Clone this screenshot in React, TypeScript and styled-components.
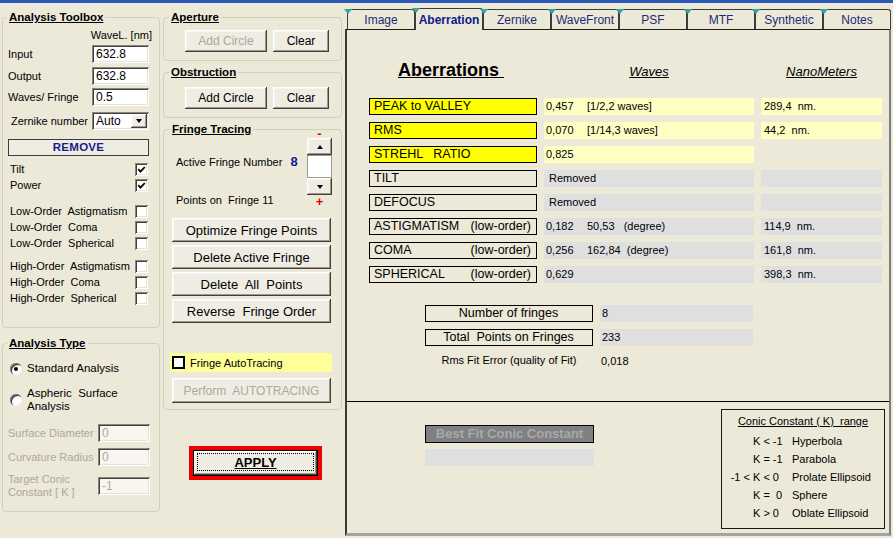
import React from "react";
import styled, { createGlobalStyle, css } from "styled-components";

const GlobalStyle = createGlobalStyle`
  html, body {
    margin: 0;
    padding: 0;
    background: #ece9d8;
  }
  body {
    font-family: "Liberation Sans", Arial, sans-serif;
    font-size: 11px;
    color: #000;
  }
  *, *::before, *::after {
    box-sizing: border-box;
  }
`;

const raised = css`
  background: #efede3;
  box-shadow: inset -1px -1px #404040, inset 1px 1px #ffffff,
    inset -2px -2px #9d9a8c, inset 2px 2px #f7f6f0;
`;

const sunken = css`
  background: #ffffff;
  box-shadow: inset 1px 1px #8a877a, inset -1px -1px #ffffff,
    inset 2px 2px #404040, inset -2px -2px #e6e3d6;
`;

const Screen = styled.div`
  width: 893px;
  height: 538px;
  overflow: hidden;
  border-top: 3px solid #2b59b8;
  display: flex;
  align-items: flex-start;
`;

const LeftCol = styled.div`
  width: 160px;
  padding-left: 2px;
  display: flex;
  flex-direction: column;
`;

const MidCol = styled.div`
  width: 179px;
  margin-left: 3px;
  display: flex;
  flex-direction: column;
`;

const RightCol = styled.div`
  width: 546px;
  margin-left: 3px;
  display: flex;
  flex-direction: column;
`;

/* ---------- group boxes ---------- */

const Group = styled.fieldset<{ $top: number; $height: number }>`
  margin: ${(p) => p.$top}px 0 0 0;
  padding: 0;
  height: ${(p) => p.$height}px;
  border: 1px solid #d0d0bf;
  border-radius: 4px;
  min-width: 0;
`;

const Legend = styled.legend<{ $offset?: number }>`
  margin-left: ${(p) => p.$offset ?? 4}px;
  padding: 0 2px;
  font-size: 11.5px;
  font-weight: bold;
  line-height: 13px;
  text-decoration: underline;
`;

/* ---------- left: toolbox ---------- */

const WaveHead = styled.div`
  margin: 4px 7px 0 0;
  height: 14px;
  line-height: 14px;
  text-align: right;
`;

const FieldRow = styled.div<{ $mt: number; $pl?: number; $pr?: number; $h?: number }>`
  display: flex;
  align-items: center;
  justify-content: space-between;
  height: ${(p) => p.$h ?? 18}px;
  margin-top: ${(p) => p.$mt}px;
  padding: 0 ${(p) => p.$pr ?? 10}px 0 ${(p) => p.$pl ?? 5}px;
`;

const FieldLabel = styled.span<{ $disabled?: boolean }>`
  line-height: 13px;
  color: ${(p) => (p.$disabled ? "#aca899" : "#000")};
`;

const TextBox = styled.div<{ $w?: number; $disabled?: boolean }>`
  ${sunken};
  width: ${(p) => p.$w ?? 57}px;
  height: 18px;
  padding: 3px 0 0 4px;
  line-height: 13px;
  font-size: 12px;
  color: ${(p) => (p.$disabled ? "#aca899" : "#000")};
  background: ${(p) => (p.$disabled ? "#f7f6f1" : "#fff")};
`;

const Select = styled.div`
  ${sunken};
  width: 57px;
  height: 18px;
  display: flex;
  align-items: center;
  padding: 2px;
  font-size: 12px;
`;

const SelectText = styled.span`
  flex: 1;
  padding-left: 2px;
`;

const DropBtn = styled.span`
  ${raised};
  width: 16px;
  height: 14px;
  display: flex;
  align-items: center;
  justify-content: center;
`;

const Arrow = styled.span<{ $up?: boolean }>`
  width: 0;
  height: 0;
  border-left: 3.5px solid transparent;
  border-right: 3.5px solid transparent;
  ${(p) =>
    p.$up ? "border-bottom: 4px solid #000;" : "border-top: 4px solid #000;"}
`;

const RemoveBtn = styled.div`
  margin: 9px 10px 0 5px;
  height: 17px;
  border: 1px solid #3c3c3c;
  background: #efede3;
  color: #1b1b8a;
  font-weight: bold;
  font-size: 11.5px;
  text-align: center;
  line-height: 15px;
  letter-spacing: 0.3px;
`;

const CheckGroup = styled.div<{ $mt: number }>`
  margin-top: ${(p) => p.$mt}px;
  display: flex;
  flex-direction: column;
`;

const CheckRow = styled.div`
  height: 16px;
  display: flex;
  align-items: center;
  justify-content: space-between;
  padding: 0 11px 0 7px;
  white-space: pre;
`;

const CheckBox = styled.span`
  ${sunken};
  width: 13px;
  height: 13px;
  display: flex;
  align-items: center;
  justify-content: center;
`;

const Tick = () => (
  <svg width="9" height="9" viewBox="0 0 9 9">
    <path d="M1.2 4.2 L3.5 6.6 L7.8 2" stroke="#000" strokeWidth="1.8" fill="none" />
  </svg>
);

/* ---------- left: analysis type ---------- */

const RadioRow = styled.div<{ $mt: number }>`
  margin-top: ${(p) => p.$mt}px;
  display: flex;
  align-items: center;
  gap: 5px;
  padding-left: 7px;
  line-height: 13px;
  font-size: 11.5px;
`;

const Radio = styled.span<{ $on?: boolean }>`
  width: 12px;
  height: 12px;
  flex: none;
  border-radius: 50%;
  background: #fff;
  box-shadow: inset 1px 1px #808080, inset 2px 2px #404040,
    inset -1px -1px #f4f3ee;
  display: flex;
  align-items: center;
  justify-content: center;

  &::after {
    content: "";
    width: 4px;
    height: 4px;
    border-radius: 50%;
    background: ${(p) => (p.$on ? "#000" : "transparent")};
  }
`;

/* ---------- middle column ---------- */

const BtnRow = styled.div<{ $mt: number }>`
  display: flex;
  gap: 6px;
  margin-top: ${(p) => p.$mt}px;
  padding-left: 21px;
`;

const Button = styled.div<{ $w: number; $h: number; $disabled?: boolean; $fs?: number }>`
  ${raised};
  width: ${(p) => p.$w}px;
  height: ${(p) => p.$h}px;
  display: flex;
  align-items: center;
  justify-content: center;
  font-size: ${(p) => p.$fs ?? 12}px;
  color: ${(p) => (p.$disabled ? "#aca899" : "#000")};
  white-space: pre;
`;

const FringeTop = styled.div`
  display: flex;
  justify-content: space-between;
  padding: 0 9px 0 12px;
`;

const FringeInfo = styled.div`
  padding-top: 19px;
  display: flex;
  flex-direction: column;
  gap: 24px;
`;

const InfoLine = styled.div`
  height: 14px;
  line-height: 14px;
  display: flex;
  white-space: pre;
`;

const ActiveNum = styled.span`
  color: #1414a0;
  font-weight: bold;
  font-size: 13px;
  margin-left: 8px;
`;

const Spinner = styled.div`
  margin-top: -7px;
  width: 25px;
  display: flex;
  flex-direction: column;
  align-items: center;
`;

const SpinSign = styled.div<{ $h: number }>`
  color: #e00000;
  font-weight: bold;
  font-size: 13px;
  height: ${(p) => p.$h}px;
  line-height: ${(p) => p.$h}px;
`;

const SpinBtn = styled.div`
  ${raised};
  width: 25px;
  height: 17px;
  display: flex;
  align-items: center;
  justify-content: center;
`;

const SpinField = styled.div`
  width: 25px;
  height: 23px;
  background: #fff;
  border: 1px solid #9d9a8c;
`;

const FringeButtons = styled.div<{ $mt: number }>`
  margin: ${(p) => p.$mt}px 0 0 8px;
  display: flex;
  flex-direction: column;
  gap: 3px;
`;

const AutoStrip = styled.div`
  margin: 30px 0 0 6px;
  width: 162px;
  height: 19px;
  background: #ffff99;
  display: flex;
  align-items: center;
  gap: 5px;
  padding-left: 2px;
`;

const BlackBox = styled.span`
  width: 13px;
  height: 13px;
  border: 2px solid #000;
  background: #fff;
`;

const ApplyFrame = styled.div`
  margin: 36px 0 0 26px;
  width: 133px;
  height: 34px;
  border: 4px solid #ee0000;
`;

const ApplyBtn = styled.div`
  ${raised};
  height: 100%;
  border: 1px solid #000;
  padding: 2px 3px 4px 3px;
`;

const FocusRing = styled.div`
  height: 100%;
  border: 1px dotted #000;
  display: flex;
  align-items: center;
  justify-content: center;
  font-weight: bold;
  font-size: 13px;
  text-decoration: underline;
`;

/* ---------- right: tabs ---------- */

const TabStrip = styled.div`
  display: flex;
  align-items: flex-end;
  margin-top: 6px;
  padding-left: 2px;
  height: 20px;
  position: relative;
  z-index: 1;
`;

const Tab = styled.div<{ $active?: boolean }>`
  position: relative;
  width: 68px;
  height: ${(p) => (p.$active ? 22 : 20)}px;
  margin-bottom: ${(p) => (p.$active ? -1 : 0)}px;
  border: 1px solid #3c3c3c;
  border-bottom: none;
  border-radius: 3px 3px 0 0;
  background: #ece9d8;
  display: flex;
  align-items: center;
  justify-content: center;
  font-size: 12px;
  font-weight: ${(p) => (p.$active ? "bold" : "normal")};
  color: ${(p) => (p.$active ? "#0b1a8c" : "#1c2a78")};

  &::before {
    content: "";
    position: absolute;
    top: -1px;
    left: -4px;
    border-left: 4px solid transparent;
    border-right: 4px solid transparent;
    border-top: 5px solid #3aa5a0;
  }
`;

const Panel = styled.div`
  height: 507px;
  border-top: 1px solid #1c1c1c;
  border-left: 2px solid #3a3a3a;
  border-right: 2px solid #7d7d7d;
  border-bottom: 3px solid #a3a3a3;
  display: flex;
  flex-direction: column;
`;

const UpperPane = styled.div`
  height: 372px;
  border-bottom: 1px solid #000;
  padding-left: 22px;
`;

const Grid = css`
  display: grid;
  grid-template-columns: 168px 210px 121px;
  column-gap: 7px;
`;

const HeadRow = styled.div`
  ${Grid};
  margin-top: 30px;
  height: 20px;
  align-items: baseline;
`;

const MainTitle = styled.span`
  padding-left: 29px;
  font-size: 18px;
  font-weight: bold;
  text-decoration: underline;
  white-space: pre;
`;

const ColTitle = styled.span`
  text-align: center;
  font-size: 13px;
  font-style: italic;
  text-decoration: underline;
`;

const Table = styled.div`
  ${Grid};
  margin-top: 18px;
  grid-auto-rows: 17px;
  row-gap: 7px;
`;

const LabelBox = styled.div<{ $yellow?: boolean; $center?: boolean }>`
  border: 1px solid #000;
  background: ${(p) => (p.$yellow ? "#ffff00" : "transparent")};
  font-size: 12.5px;
  line-height: 15px;
  padding: 0 5px 0 4px;
  display: flex;
  justify-content: ${(p) => (p.$center ? "center" : "space-between")};
  white-space: pre;
`;

const ValueBox = styled.div<{ $tone?: "yellow" | "gray" | "none"; $pl?: number }>`
  background: ${(p) =>
    p.$tone === "yellow" ? "#ffffc4" : p.$tone === "gray" ? "#dfdfdf" : "transparent"};
  line-height: 17px;
  padding-left: ${(p) => p.$pl ?? 2}px;
  display: flex;
  white-space: pre;
`;

const FirstVal = styled.span`
  width: 41px;
`;

const FitGrid = styled.div`
  margin: 22px 0 0 56px;
  display: grid;
  grid-template-columns: 168px 153px;
  column-gap: 7px;
  row-gap: 7px;
  grid-auto-rows: 17px;
`;

const RmsLabel = styled.div`
  text-align: center;
  line-height: 14px;
`;

const LowerPane = styled.div`
  flex: 1;
  display: flex;
  align-items: flex-start;
  padding: 0 4px 0 78px;
`;

const ConicFit = styled.div`
  margin-top: 23px;
  width: 169px;
  display: flex;
  flex-direction: column;
  gap: 6px;
`;

const BestFit = styled.div`
  height: 18px;
  background: #808080;
  border: 1px solid #000;
  color: #a9a9a9;
  font-weight: bold;
  font-size: 13px;
  text-align: center;
  line-height: 16px;
`;

const FitValue = styled.div`
  height: 17px;
  background: #dfdfdf;
`;

const ConicBox = styled.div`
  margin-left: auto;
  margin-top: 7px;
  width: 164px;
  height: 120px;
  border: 1px solid #1a1a1a;
  padding-top: 4px;
`;

const ConicTitle = styled.div`
  text-align: center;
  height: 14px;
  line-height: 14px;
  text-decoration: underline;
  margin-bottom: 4px;
  white-space: pre;
`;

const ConicRow = styled.div`
  display: grid;
  grid-template-columns: 31px 39px 1fr;
  height: 18px;
  align-items: center;
  white-space: pre;
`;

const ConicPre = styled.span`
  text-align: right;
`;

/* ---------- data ---------- */

const checks: string[][] = [
  ["Tilt", "Power"],
  ["Low-Order  Astigmatism", "Low-Order  Coma", "Low-Order  Spherical"],
  ["High-Order  Astigmatism", "High-Order  Coma", "High-Order  Spherical"],
];

type Row = {
  label: string;
  suffix?: string;
  yellow?: boolean;
  v1: string;
  v2?: string;
  nm?: string;
  nmBox: boolean;
  removed?: boolean;
};

const rows: Row[] = [
  { label: "PEAK to VALLEY", yellow: true, v1: "0,457", v2: "[1/2,2 waves]", nm: "289,4  nm.", nmBox: true },
  { label: "RMS", yellow: true, v1: "0,070", v2: "[1/14,3 waves]", nm: "44,2  nm.", nmBox: true },
  { label: "STREHL   RATIO", yellow: true, v1: "0,825", nmBox: false },
  { label: "TILT", v1: "Removed", removed: true, nmBox: true },
  { label: "DEFOCUS", v1: "Removed", removed: true, nmBox: true },
  { label: "ASTIGMATISM", suffix: "(low-order)", v1: "0,182", v2: "50,53   (degree)", nm: "114,9  nm.", nmBox: true },
  { label: "COMA", suffix: "(low-order)", v1: "0,256", v2: "162,84  (degree)", nm: "161,8  nm.", nmBox: true },
  { label: "SPHERICAL", suffix: "(low-order)", v1: "0,629", nm: "398,3  nm.", nmBox: true },
];

const tabs = ["Image", "Aberration", "Zernike", "WaveFront", "PSF", "MTF", "Synthetic", "Notes"];

const conic: [string, string, string][] = [
  ["", "K < -1", "Hyperbola"],
  ["", "K = -1", "Parabola"],
  ["-1 < ", "K < 0", "Prolate Ellipsoid"],
  ["", "K =  0", "Sphere"],
  ["", "K > 0", "Oblate Ellipsoid"],
];

export default function App() {
  return (
    <>
      <GlobalStyle />
      <Screen>
        <LeftCol>
          <Group $top={8} $height={317}>
            <Legend $offset={4}>Analysis Toolbox</Legend>
            <WaveHead>WaveL. [nm]</WaveHead>
            <FieldRow $mt={3}>
              <FieldLabel>Input</FieldLabel>
              <TextBox>632.8</TextBox>
            </FieldRow>
            <FieldRow $mt={4}>
              <FieldLabel>Output</FieldLabel>
              <TextBox>632.8</TextBox>
            </FieldRow>
            <FieldRow $mt={3}>
              <FieldLabel>Waves/ Fringe</FieldLabel>
              <TextBox>0.5</TextBox>
            </FieldRow>
            <FieldRow $mt={6} $pl={8}>
              <FieldLabel>Zernike number</FieldLabel>
              <Select>
                <SelectText>Auto</SelectText>
                <DropBtn>
                  <Arrow />
                </DropBtn>
              </Select>
            </FieldRow>
            <RemoveBtn>REMOVE</RemoveBtn>
            {checks.map((group, gi) => (
              <CheckGroup key={gi} $mt={[5, 10, 7][gi]}>
                {group.map((c) => (
                  <CheckRow key={c}>
                    <span>{c}</span>
                    <CheckBox>{gi === 0 && <Tick />}</CheckBox>
                  </CheckRow>
                ))}
              </CheckGroup>
            ))}
          </Group>

          <Group $top={9} $height={175}>
            <Legend $offset={4}>Analysis Type</Legend>
            <RadioRow $mt={12}>
              <Radio $on />
              <span>Standard Analysis</span>
            </RadioRow>
            <RadioRow $mt={12}>
              <Radio />
              <span>
                Aspheric&nbsp; Surface
                <br />
                Analysis
              </span>
            </RadioRow>
            <FieldRow $mt={11} $pr={9}>
              <FieldLabel $disabled>Surface Diameter</FieldLabel>
              <TextBox $w={52} $disabled>
                0
              </TextBox>
            </FieldRow>
            <FieldRow $mt={6} $pr={9}>
              <FieldLabel $disabled>Curvature Radius</FieldLabel>
              <TextBox $w={52} $disabled>
                0
              </TextBox>
            </FieldRow>
            <FieldRow $mt={7} $pr={9} $h={26}>
              <FieldLabel $disabled>
                Target Conic
                <br />
                Constant [ K ]
              </FieldLabel>
              <TextBox $w={52} $disabled>
                -1
              </TextBox>
            </FieldRow>
          </Group>
        </LeftCol>

        <MidCol>
          <Group $top={8} $height={50}>
            <Legend $offset={5}>Aperture</Legend>
            <BtnRow $mt={6}>
              <Button $w={82} $h={22} $disabled>
                Add Circle
              </Button>
              <Button $w={56} $h={22}>
                Clear
              </Button>
            </BtnRow>
          </Group>

          <Group $top={5} $height={52}>
            <Legend $offset={5}>Obstruction</Legend>
            <BtnRow $mt={8}>
              <Button $w={82} $h={22}>
                Add Circle
              </Button>
              <Button $w={56} $h={22}>
                Clear
              </Button>
            </BtnRow>
          </Group>

          <Group $top={5} $height={287}>
            <Legend $offset={6}>Fringe Tracing</Legend>
            <FringeTop>
              <FringeInfo>
                <InfoLine>
                  Active Fringe Number<ActiveNum>8</ActiveNum>
                </InfoLine>
                <InfoLine>Points on  Fringe 11</InfoLine>
              </FringeInfo>
              <Spinner>
                <SpinSign $h={9}>-</SpinSign>
                <SpinBtn>
                  <Arrow $up />
                </SpinBtn>
                <SpinField />
                <SpinBtn>
                  <Arrow />
                </SpinBtn>
                <SpinSign $h={13}>+</SpinSign>
              </Spinner>
            </FringeTop>
            <FringeButtons $mt={10}>
              <Button $w={159} $h={24} $fs={13}>Optimize Fringe Points</Button>
              <Button $w={159} $h={24} $fs={13}>Delete Active Fringe</Button>
              <Button $w={159} $h={24} $fs={13}>Delete  All  Points</Button>
              <Button $w={159} $h={24} $fs={13}>Reverse  Fringe Order</Button>
            </FringeButtons>
            <AutoStrip>
              <BlackBox />
              <span>Fringe AutoTracing</span>
            </AutoStrip>
            <FringeButtons $mt={6}>
              <Button $w={159} $h={25} $disabled>
                Perform  AUTOTRACING
              </Button>
            </FringeButtons>
          </Group>

          <ApplyFrame>
            <ApplyBtn>
              <FocusRing>APPLY</FocusRing>
            </ApplyBtn>
          </ApplyFrame>
        </MidCol>

        <RightCol>
          <TabStrip>
            {tabs.map((t) => (
              <Tab key={t} $active={t === "Aberration"}>
                {t}
              </Tab>
            ))}
          </TabStrip>
          <Panel>
            <UpperPane>
              <HeadRow>
                <MainTitle>Aberrations </MainTitle>
                <ColTitle>Waves</ColTitle>
                <ColTitle>NanoMeters</ColTitle>
              </HeadRow>
              <Table>
                {rows.map((r) => (
                  <React.Fragment key={r.label}>
                    <LabelBox $yellow={r.yellow}>
                      <span>{r.label}</span>
                      {r.suffix && <span>{r.suffix}</span>}
                    </LabelBox>
                    <ValueBox $tone={r.yellow ? "yellow" : "gray"} $pl={r.removed ? 5 : 2}>
                      {r.v2 ? (
                        <>
                          <FirstVal>{r.v1}</FirstVal>
                          <span>{r.v2}</span>
                        </>
                      ) : (
                        <span>{r.v1}</span>
                      )}
                    </ValueBox>
                    <ValueBox $tone={!r.nmBox ? "none" : r.yellow ? "yellow" : "gray"} $pl={3}>
                      {r.nm}
                    </ValueBox>
                  </React.Fragment>
                ))}
              </Table>
              <FitGrid>
                <LabelBox $center>Number of fringes</LabelBox>
                <ValueBox $tone="gray">8</ValueBox>
                <LabelBox $center>Total  Points on Fringes</LabelBox>
                <ValueBox $tone="gray">233</ValueBox>
                <RmsLabel>Rms Fit Error (quality of Fit)</RmsLabel>
                <ValueBox $tone="none" $pl={1}>
                  0,018
                </ValueBox>
              </FitGrid>
            </UpperPane>
            <LowerPane>
              <ConicFit>
                <BestFit>Best Fit Conic Constant</BestFit>
                <FitValue />
              </ConicFit>
              <ConicBox>
                <ConicTitle>Conic Constant ( K)  range</ConicTitle>
                {conic.map(([pre, k, name]) => (
                  <ConicRow key={name}>
                    <ConicPre>{pre}</ConicPre>
                    <span>{k}</span>
                    <span>{name}</span>
                  </ConicRow>
                ))}
              </ConicBox>
            </LowerPane>
          </Panel>
        </RightCol>
      </Screen>
    </>
  );
}
